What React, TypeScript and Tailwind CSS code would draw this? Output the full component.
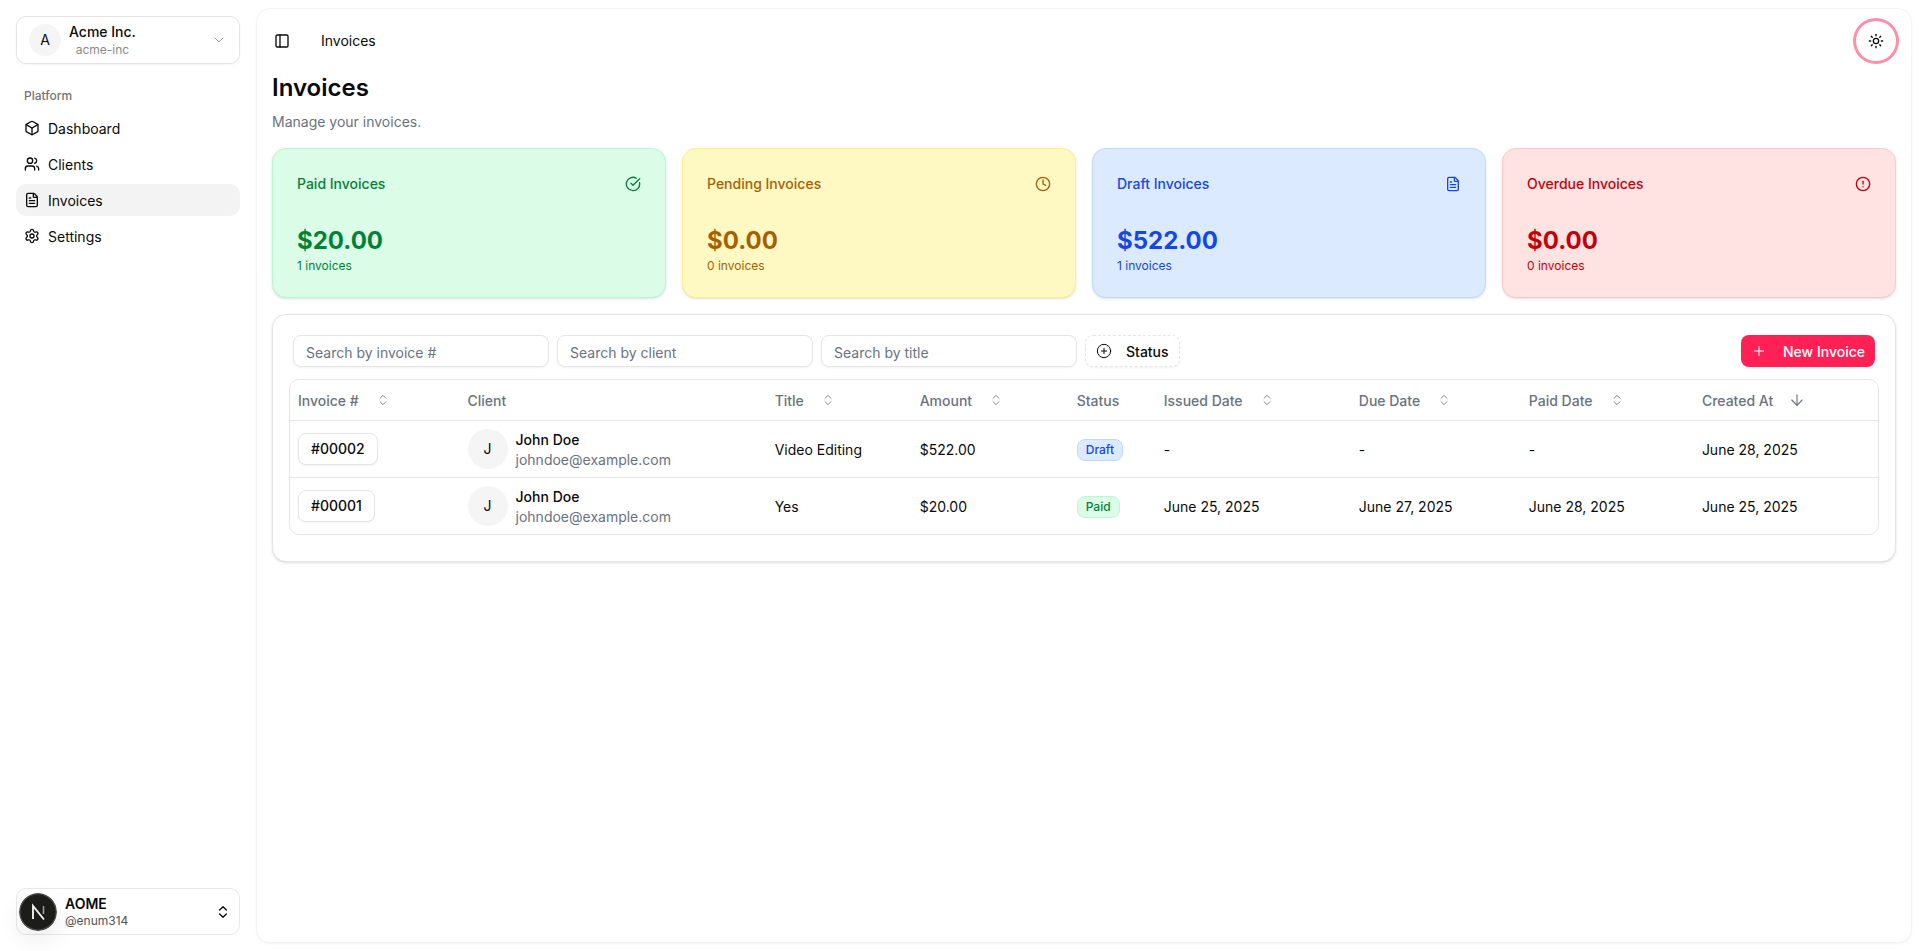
import React from 'react';
import {
  ArrowDown,
  Box,
  ChevronDown,
  ChevronsUpDown,
  CircleAlert,
  CircleCheckBig,
  CirclePlus,
  Clock,
  FileText,
  PanelLeft,
  Plus,
  Settings,
  Sun,
  Users,
} from 'lucide-react';

const navItems = [
  { label: 'Dashboard', icon: Box },
  { label: 'Clients', icon: Users },
  { label: 'Invoices', icon: FileText, active: true },
  { label: 'Settings', icon: Settings },
];

const stats = [
  {
    label: 'Paid Invoices',
    value: '$20.00',
    count: '1 invoices',
    icon: CircleCheckBig,
    tone: 'bg-green-100 border-green-200 text-green-700',
  },
  {
    label: 'Pending Invoices',
    value: '$0.00',
    count: '0 invoices',
    icon: Clock,
    tone: 'bg-yellow-100 border-yellow-200 text-yellow-700',
  },
  {
    label: 'Draft Invoices',
    value: '$522.00',
    count: '1 invoices',
    icon: FileText,
    tone: 'bg-blue-100 border-blue-200 text-blue-700',
  },
  {
    label: 'Overdue Invoices',
    value: '$0.00',
    count: '0 invoices',
    icon: CircleAlert,
    tone: 'bg-red-100 border-red-200 text-red-700',
  },
];

const rows = [
  {
    number: '#00002',
    title: 'Video Editing',
    amount: '$522.00',
    status: 'Draft',
    statusTone: 'bg-blue-100 border-blue-200 text-blue-700',
    issued: '-',
    due: '-',
    paid: '-',
    created: 'June 28, 2025',
  },
  {
    number: '#00001',
    title: 'Yes',
    amount: '$20.00',
    status: 'Paid',
    statusTone: 'bg-green-100 border-green-200 text-green-700',
    issued: 'June 25, 2025',
    due: 'June 27, 2025',
    paid: 'June 28, 2025',
    created: 'June 25, 2025',
  },
];

const SortHead: React.FC<{ label: string; className: string; desc?: boolean }> = ({ label, className, desc }) => (
  <th className={`h-10 px-2 text-left font-medium ${className}`}>
    <span className="flex items-center gap-4">
      <span className="pt-[3px]">{label}</span>
      {desc ? (
        <ArrowDown className="w-[18px] h-[18px] -ml-px text-gray-500" strokeWidth={1.5} />
      ) : (
        <ChevronsUpDown className="w-3.5 h-3.5 mx-px text-gray-500" strokeWidth={1.5} />
      )}
    </span>
  </th>
);

const SearchBox: React.FC<{ placeholder: string }> = ({ placeholder }) => (
  <input
    placeholder={placeholder}
    className="w-64 h-8 rounded-lg border border-[#e5e5e5] bg-white px-3 pt-[3px] text-sm shadow-xs outline-none placeholder:text-gray-500"
  />
);

const NextMark = () => (
  <svg viewBox="0 0 38 38" className="w-[38px] h-[38px] rounded-full shadow-[0_10px_24px_rgba(0,0,0,0.08)]">
    <circle cx="19" cy="19" r="18.25" fill="#1c1c1a" stroke="#4a4a48" strokeWidth="1.5" />
    <path d="M14 26V13L25 26.5" fill="none" stroke="#f2f2f2" strokeWidth="1.9" />
    <path d="M24.5 13V21" fill="none" stroke="#a0a0a0" strokeWidth="1.5" />
  </svg>
);

export default function App() {
  return (
    <div className="flex h-[951px] overflow-hidden bg-white font-['Inter',sans-serif] text-sm text-[#0a0a0a]">
      <aside className="flex w-64 shrink-0 flex-col p-4">
        <button className="flex h-12 items-center rounded-[10px] border border-[#e5e5e5] bg-white pl-3 pr-3 shadow-xs">
          <span className="flex h-8 w-8 items-center justify-center rounded-full bg-[#f5f5f5]">A</span>
          <span className="ml-2 flex flex-col items-center leading-none">
            <span className="font-medium leading-[18px]">Acme Inc.</span>
            <span className="pt-px text-xs leading-4 text-[#8a8a8a]">acme-inc</span>
          </span>
          <ChevronDown className="ml-auto w-4 h-4 text-gray-400" strokeWidth={1.5} />
        </button>

        <div className="mt-4 flex h-8 items-center px-2 text-xs font-medium text-[#737373]">Platform</div>
        <nav className="flex flex-col gap-1">
          {navItems.map((item) => (
            <a
              key={item.label}
              className={`flex h-8 items-center gap-2 rounded-[10px] px-2 ${item.active ? 'bg-[#f3f3f3]' : ''}`}
            >
              <item.icon className="w-4 h-4" strokeWidth={2} />
              <span className="pt-px">{item.label}</span>
            </a>
          ))}
        </nav>

        <div className="mt-auto flex h-[47px] items-center rounded-[10px] border border-[#e8e8e8] bg-white pl-0.5 pr-2">
          <NextMark />
          <span className="ml-2 flex flex-col">
            <span className="font-semibold leading-[18px]">AOME</span>
            <span className="text-xs leading-4 text-[#525252]">@enum314</span>
          </span>
          <ChevronsUpDown className="ml-auto w-4 h-4" strokeWidth={2} />
        </div>
      </aside>

      <main className="my-2 mr-2 flex min-w-0 flex-1 flex-col rounded-[14px] border border-[#f4f4f4] bg-white px-[15px] shadow-xs">
        <header className="flex h-[63px] shrink-0 items-center">
          <button className="flex h-7 w-7 items-center justify-center -ml-1">
            <PanelLeft className="w-4 h-4" strokeWidth={2} />
          </button>
          <span className="ml-[25px]">Invoices</span>
          <button className="ml-auto flex h-10 w-10 items-center justify-center rounded-full bg-white ring-[3px] ring-[#fd8fa8]">
            <Sun className="w-4 h-4" strokeWidth={2} />
          </button>
        </header>

        <h1 className="text-2xl font-semibold leading-8">Invoices</h1>
        <p className="mt-2 leading-5 text-gray-500">Manage your invoices.</p>

        <section className="mt-4 grid grid-cols-4 gap-4">
          {stats.map((stat) => (
            <div key={stat.label} className={`h-[150px] rounded-[14px] border px-6 pt-[25px] shadow-sm ${stat.tone}`}>
              <div className="flex h-5 items-center justify-between">
                <span className="font-medium">{stat.label}</span>
                <stat.icon className="w-4 h-4" strokeWidth={2} />
              </div>
              <div className="mt-[31px] text-2xl font-bold leading-8">{stat.value}</div>
              <div className="mt-px text-xs leading-4">{stat.count}</div>
            </div>
          ))}
        </section>

        <section className="mt-4 rounded-[14px] border border-[#e5e5e5] bg-white px-5 pt-5 pb-[26px] shadow-sm">
          <div className="flex items-center gap-2">
            <SearchBox placeholder="Search by invoice #" />
            <SearchBox placeholder="Search by client" />
            <SearchBox placeholder="Search by title" />
            <button className="flex h-8 items-center gap-3.5 rounded-lg border border-dashed border-[#e5e5e5] bg-white px-2.5 font-medium shadow-xs">
              <CirclePlus className="w-4 h-4" strokeWidth={1.5} />
              <span className="pt-[2px]">Status</span>
            </button>
            <button className="ml-auto flex h-8 items-center gap-4 rounded-lg bg-rose-500 px-2.5 font-medium text-white shadow-xs">
              <Plus className="w-4 h-4" strokeWidth={1.5} />
              <span className="pt-[2px]">New Invoice</span>
            </button>
          </div>

          <div className="-mx-1 mt-3 overflow-hidden rounded-[10px] border border-[#e5e5e5]">
            <table className="w-full table-fixed border-collapse">
              <thead>
                <tr className="border-b border-[#e5e5e5] text-gray-500">
                  <SortHead label="Invoice #" className="w-[169.5px]" />
                  <th className="w-[307px] px-2 pt-[3px] text-left font-medium">Client</th>
                  <SortHead label="Title" className="w-[145px]" />
                  <SortHead label="Amount" className="w-[157px]" />
                  <th className="w-[87px] px-2 pt-[3px] text-left font-medium">Status</th>
                  <SortHead label="Issued Date" className="w-[195px]" />
                  <SortHead label="Due Date" className="w-[170px]" />
                  <SortHead label="Paid Date" className="w-[173px]" />
                  <SortHead label="Created At" className="w-[184px]" desc />
                </tr>
              </thead>
              <tbody>
                {rows.map((row) => (
                  <tr key={row.number} className="h-[57px] border-b border-[#e5e5e5] last:border-b-0">
                    <td className="px-2">
                      <span className="inline-flex h-8 items-center rounded-lg border border-[#e5e5e5] bg-white px-3 pt-px font-medium shadow-xs">
                        {row.number}
                      </span>
                    </td>
                    <td className="px-2">
                      <div className="flex items-center gap-2">
                        <span className="flex h-10 w-10 items-center justify-center rounded-full bg-[#f5f5f5]">J</span>
                        <span className="flex flex-col pt-[3px]">
                          <span className="font-medium leading-5">John Doe</span>
                          <span className="leading-5 text-gray-500">johndoe@example.com</span>
                        </span>
                      </div>
                    </td>
                    <td className="px-2 pt-[3px]">{row.title}</td>
                    <td className="px-2 pt-[3px]">{row.amount}</td>
                    <td className="px-2">
                      <span
                        className={`inline-flex h-[22px] translate-y-px items-center rounded-lg border px-2 text-xs font-medium ${row.statusTone}`}
                      >
                        {row.status}
                      </span>
                    </td>
                    <td className="px-2 pt-[3px]">{row.issued}</td>
                    <td className="px-2 pt-[3px]">{row.due}</td>
                    <td className="px-2 pt-[3px]">{row.paid}</td>
                    <td className="px-2 pt-[3px]">{row.created}</td>
                  </tr>
                ))}
              </tbody>
            </table>
          </div>
        </section>
      </main>
    </div>
  );
}
